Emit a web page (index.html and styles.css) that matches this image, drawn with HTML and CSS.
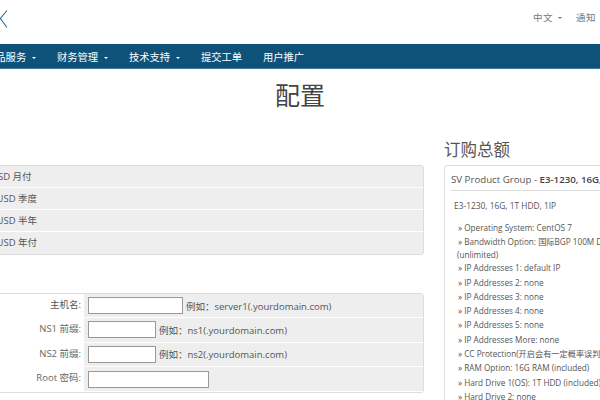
FILE: index.html
```html
<!DOCTYPE html>
<html lang="zh">
<head>
<meta charset="utf-8">
<title>配置</title>
<link rel="stylesheet" href="styles.css">
</head>
<body>
<div class="page">
  <header class="top">
    <svg class="logo" width="8" height="18" viewBox="0 0 8 18"><path d="M7 .5 L.4 8.5 L7 17.5" fill="none" stroke="#2f6f96" stroke-width="1.1"/></svg>
    <div class="top-links">
      <span>中文 <i class="caret"></i></span>
      <span>通知 <i class="caret"></i></span>
    </div>
  </header>
  <nav class="nav">
    <span>产品服务<i class="caret white"></i></span>
    <span>财务管理<i class="caret white"></i></span>
    <span>技术支持<i class="caret white"></i></span>
    <span>提交工单</span>
    <span>用户推广</span>
  </nav>
  <h1 class="title">配置</h1>
  <div class="cols">
    <main class="left">
      <div class="panel cycles">
        <div class="row">$99.00 USD 月付</div>
        <div class="row">$300.00 USD 季度</div>
        <div class="row">$600.00 USD 半年</div>
        <div class="row">$999.00 USD 年付</div>
      </div>
      <div class="panel form">
        <div class="frow"><label>主机名:</label><div class="field"><input class="w-l" type="text"><span>例如：server1(.yourdomain.com)</span></div></div>
        <div class="frow"><label class="soft">NS1 前缀:</label><div class="field"><input class="w-s" type="text"><span>例如：ns1(.yourdomain.com)</span></div></div>
        <div class="frow"><label class="soft">NS2 前缀:</label><div class="field"><input class="w-s" type="text"><span>例如：ns2(.yourdomain.com)</span></div></div>
        <div class="frow"><label class="soft">Root 密码:</label><div class="field"><input class="w-x" type="text"></div></div>
      </div>
    </main>
    <aside class="right">
      <h2>订购总额</h2>
      <div class="summary">
        <div class="sum-head">SV Product Group - <b>E3-1230, 16G, 1T HDD, 1IP</b></div>
        <p class="desc">E3-1230, 16G, 1T HDD, 1IP</p>
        <ul>
          <li>» Operating System: CentOS 7</li>
          <li class="wrap">» Bandwidth Option: 国际BGP 100M DDoS<br><span class="unl">(unlimited)</span></li>
          <li>» IP Addresses 1: default IP</li>
          <li>» IP Addresses 2: none</li>
          <li>» IP Addresses 3: none</li>
          <li>» IP Addresses 4: none</li>
          <li>» IP Addresses 5: none</li>
          <li>» IP Addresses More: none</li>
          <li>» CC Protection(开启会有一定概率误判)</li>
          <li>» RAM Option: 16G RAM (included)</li>
          <li>» Hard Drive 1(OS): 1T HDD (included)</li>
          <li>» Hard Drive 2: none</li>
        </ul>
      </div>
    </aside>
  </div>
</div>
</body>
</html>
```
FILE: styles.css
```css
* { box-sizing: border-box; }
html, body { margin: 0; height: 400px; overflow: hidden; background: #fff; }
body { font-family: "Open Sans", "Noto Sans CJK SC", sans-serif; color: #555; font-size: 9.5px; }
.page { width: 600px; height: 400px; overflow: hidden; }
.top { height: 44px; display: flex; justify-content: space-between; align-items: flex-start; }
.logo { margin-top: 10px; display: block; }
.top-links { display: flex; gap: 14px; margin-right: -5px; padding-top: 11px; font-size: 9.5px; color: #777; letter-spacing: .5px; line-height: 14px; }
.caret { display: inline-block; width: 0; height: 0; border: 2px solid transparent; border-top-color: #777; border-bottom: 0; vertical-align: middle; margin-left: 2px; }
.caret.white { border-top-color: #fff; margin-left: 6px; }
.nav { height: 25px; background: #0f5279; border-bottom: 1px solid #3e7a96; display: flex; margin-left: -15px; width: 700px; align-items: center; color: #fff; font-size: 10.3px; }
.nav span { margin-right: 20.8px; white-space: nowrap; }
.title { margin: 0; height: 52px; padding-top: 9px; text-align: center; font-weight: 400; font-size: 25px; line-height: 34px; color: #444; }
.cols { display: flex; margin-left: -100px; gap: 20px; align-items: flex-start; }
.left { width: 524px; flex: none; padding-top: 44px; }
.panel { background: #eee; border: 1px solid #ddd; border-radius: 3px; }
.row { height: 22px; line-height: 21px; padding-left: 58px; border-bottom: 1px solid #fff; font-size: 9.5px; }
.row:last-child { border-bottom: 0; }
.cycles { height: 90px; }
.form { margin-top: 38px; background: #fff; height: 100px; }
.frow { display: flex; height: 24.3px; border-bottom: 1px solid #fff; }
.frow:last-child { border-bottom: 0; }
.frow label { width: 183px; flex: none; text-align: right; padding-right: 3px; line-height: 22px; font-size: 9.5px; color: #555; }
.frow label.soft { color: #666; }
.field { flex: 1; background: #eee; display: flex; align-items: center; gap: 3px; padding-left: 4px; font-size: 9.5px; }
.field input { height: 17px; border: 1px solid #999; background: #fff; padding: 0; border-radius: 0; }
.w-l { width: 95px; }
.w-s { width: 68px; }
.w-x { width: 121px; }
.right { width: 300px; flex: none; }
.right h2 { margin: 18px 0 0; height: 22px; font-weight: 400; font-size: 16.5px; line-height: 22px; color: #555; }
.summary { margin-top: 4px; border: 1px solid #ddd; border-radius: 3px; padding: 0 6px; height: 300px; white-space: nowrap; }
.sum-head { height: 25px; line-height: 27px; border-bottom: 1px solid #ddd; font-size: 9.7px; }
.sum-head b { font-weight: 600; color: #444; }
.desc { margin: 8px 0 0 3px; font-size: 8.4px; line-height: 14px; }
ul { list-style: none; margin: 8px 0 0; padding: 0; font-size: 8.2px; }
li { line-height: 14.3px; padding-left: 7px; }
.wrap { line-height: 13px; }
.unl { margin-left: -1px; }
```
